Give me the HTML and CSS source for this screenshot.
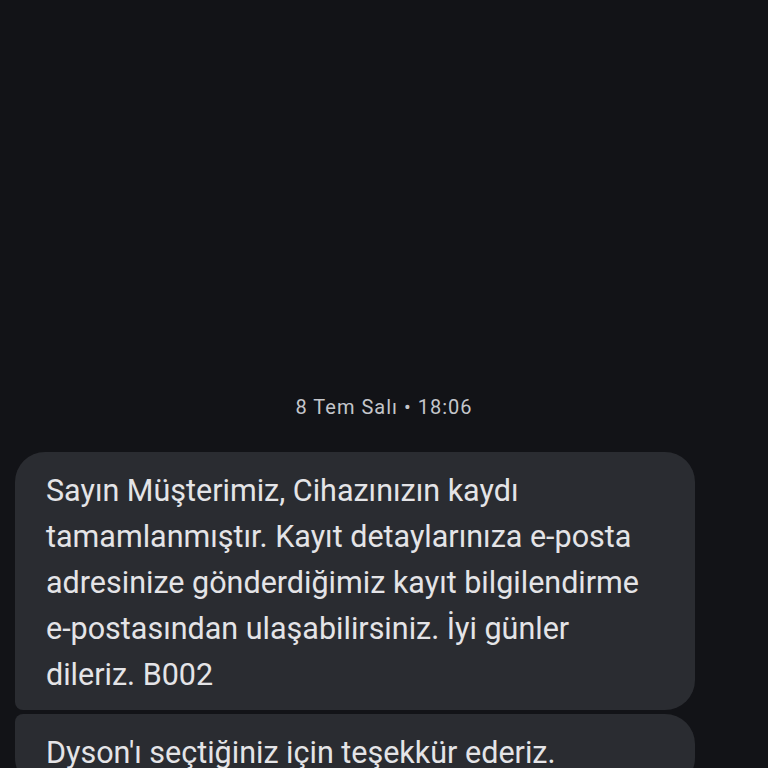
FILE: index.html
```html
<!DOCTYPE html>
<html lang="tr">
<head>
<meta charset="utf-8">
<link rel="stylesheet" href="styles.css">
</head>
<body>
<div class="screen">
  <div class="stamp">8 Tem Salı • 18:06</div>
  <div class="thread">
    <div class="bubble first">
      <p>Sayın Müşterimiz, Cihazınızın kaydı<br>tamamlanmıştır. Kayıt detaylarınıza e-posta<br>adresinize gönderdiğimiz kayıt bilgilendirme<br>e-postasından ulaşabilirsiniz. İyi günler<br>dileriz. B002</p>
    </div>
    <div class="bubble last">
      <p>Dyson'ı seçtiğiniz için teşekkür ederiz.</p>
    </div>
  </div>
</div>
</body>
</html>
```
FILE: styles.css
```css
html, body {
  margin: 0;
  padding: 0;
  background: #121317;
}
.screen {
  width: 768px;
  height: 768px;
  overflow: hidden;
  padding-top: 392px;
  box-sizing: border-box;
  font-family: Roboto, "Noto Sans", sans-serif;
}
.stamp {
  text-align: center;
  color: #c4c6cb;
  font-size: 20px;
  letter-spacing: 1px;
  line-height: 30px;
  height: 30px;
}
.thread {
  margin-top: 30px;
  padding-left: 15px;
  display: flex;
  flex-direction: column;
  gap: 4px;
}
.bubble {
  width: 680px;
  box-sizing: border-box;
  background: #2a2c31;
  padding: 16px 20px 12px 31px;
  border-radius: 30px;
}
.bubble.first {
  border-bottom-left-radius: 8px;
}
.bubble.last {
  border-top-left-radius: 8px;
}
.bubble p {
  margin: 0;
  color: #e4e4e7;
  font-size: 30.5px;
  line-height: 46px;
  white-space: nowrap;
}
```
